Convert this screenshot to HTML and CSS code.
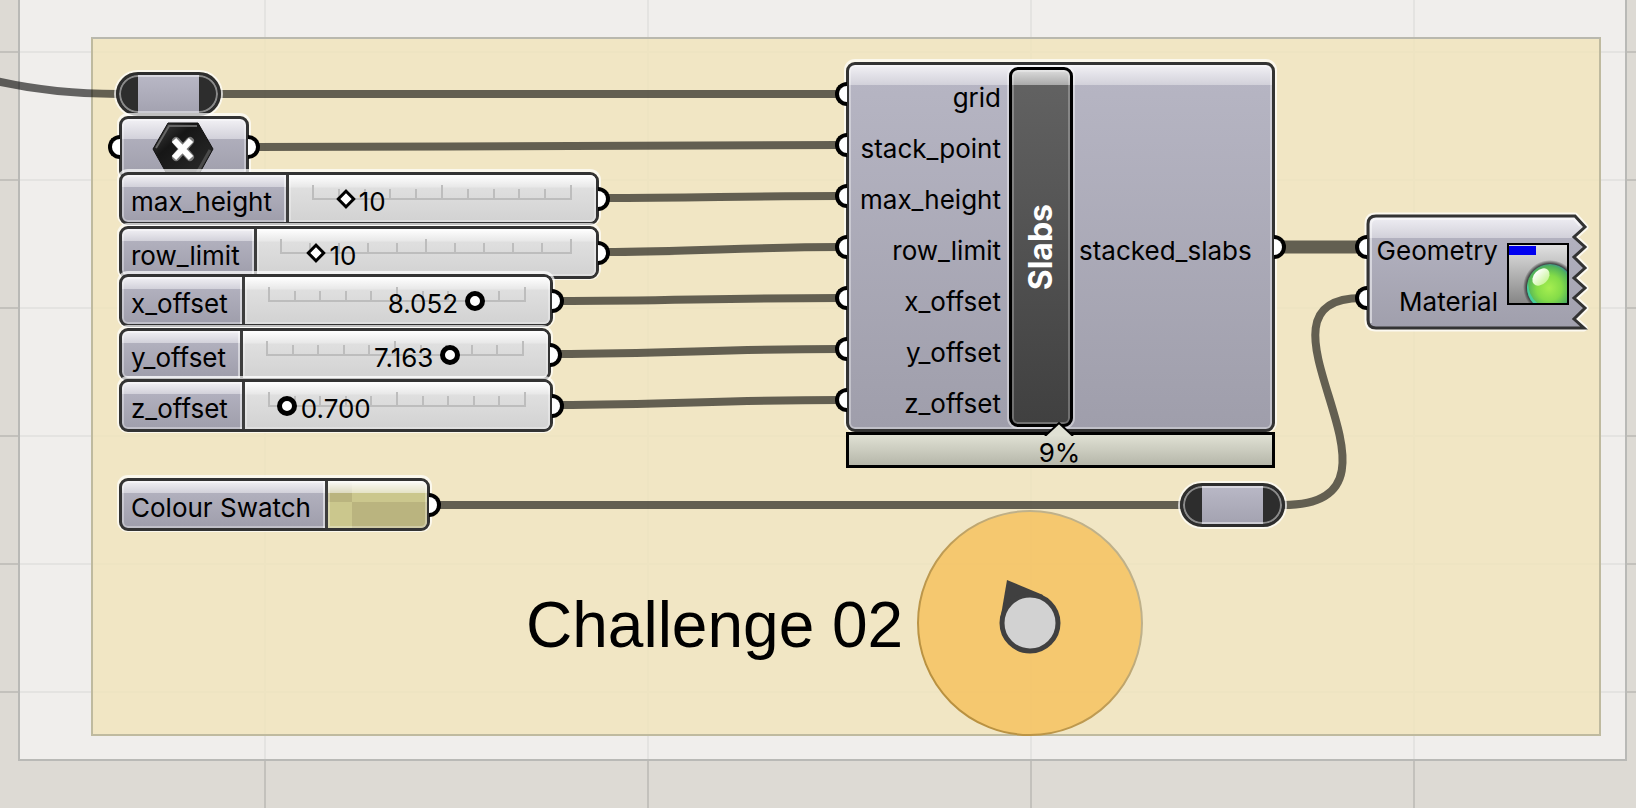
FILE: index.html
```html
<!DOCTYPE html>
<html lang="en">
<head>
<meta charset="utf-8">
<title>Challenge 02</title>
<link rel="stylesheet" href="styles.css">
</head>
<body>
<main class="canvas">
  <div class="panel"></div>
  <section class="group" aria-label="Challenge 02"></section>

  <svg class="wires" width="1636" height="808" aria-hidden="true">
    <path d="M-4 81C40 91 76 94 118 94"/>
    <path d="M218 94H840"/>
    <path d="M255 147C450 147 640 145 840 145"/>
    <path d="M604 198C690 198 750 196 840 196"/>
    <path d="M604 252C690 252 750 247 840 247"/>
    <path d="M558 301C670 301 720 298 840 298"/>
    <path d="M556 354C670 354 720 349 840 349"/>
    <path d="M558 405C670 405 720 400 840 400"/>
    <path d="M436 505H1182"/>
    <path class="thick" d="M1282 247H1360"/>
    <path d="M1283 505C1436 505 1230 298 1362 298"/>
  </svg>

  <div class="relay relay-grid"></div>
  <div class="relay relay-material"></div>

  <div class="node point">
    <i class="port in"></i><i class="port out"></i>
    <svg class="hex" width="64" height="56" viewBox="0 0 64 56">
      <defs><linearGradient id="hx" x1="0" y1="0" x2="1" y2="1"><stop offset="0" stop-color="#444"/><stop offset=".35" stop-color="#161616"/><stop offset="1" stop-color="#2c2c2c"/></linearGradient></defs>
      <path d="M16 1H46L61 27L46 54H16L1 27Z" fill="url(#hx)" stroke="#111" stroke-width="1"/>
      <path d="M4 26L17 4H45" fill="none" stroke="#666" stroke-width="2"/>
      <path d="M58 28L45 51" fill="none" stroke="#4a4a4a" stroke-width="3"/>
      <path d="M24 19L38 35M38 19L24 35" stroke="#777" stroke-width="8" stroke-linecap="round"/>
      <path d="M22 18L39 36M39 18L22 36" stroke="#fff" stroke-width="6"/>
    </svg>
  </div>

  <div class="node slider max-height">
    <label for="max">max_height</label>
    <div class="track"><div class="rail" style="--at:12.3%"><i class="ticks"></i><output for="max">10</output></div><input class="whole" id="max" type="range" min="0" max="81" value="10"></div>
    <i class="port out"></i>
  </div>
  <div class="node slider row-limit">
    <label for="row">row_limit</label>
    <div class="track"><div class="rail" style="--at:12%"><i class="ticks"></i><output for="row">10</output></div><input class="whole" id="row" type="range" min="0" max="83" value="10"></div>
    <i class="port out"></i>
  </div>
  <div class="node slider x-offset">
    <label for="xo">x_offset</label>
    <div class="track"><div class="rail" style="--at:80.52%"><i class="ticks"></i><output class="before" for="xo">8.052</output></div><input id="xo" type="range" min="0" max="10" step="0.001" value="8.052"></div>
    <i class="port out"></i>
  </div>
  <div class="node slider y-offset">
    <label for="yo">y_offset</label>
    <div class="track"><div class="rail" style="--at:71.63%"><i class="ticks"></i><output class="before" for="yo">7.163</output></div><input id="yo" type="range" min="0" max="10" step="0.001" value="7.163"></div>
    <i class="port out"></i>
  </div>
  <div class="node slider z-offset">
    <label for="zo">z_offset</label>
    <div class="track"><div class="rail" style="--at:7%"><i class="ticks"></i><output for="zo">0.700</output></div><input id="zo" type="range" min="0" max="10" step="0.001" value="0.7"></div>
    <i class="port out"></i>
  </div>

  <div class="node slider colour">
    <label for="swatch">Colour Swatch</label>
    <button class="swatch" id="swatch" type="button"></button>
    <i class="port out"></i>
  </div>

  <div class="node slabs">
    <ul class="inputs">
      <li>grid<i class="port in"></i></li>
      <li>stack_point<i class="port in"></i></li>
      <li>max_height<i class="port in"></i></li>
      <li>row_limit<i class="port in"></i></li>
      <li>x_offset<i class="port in"></i></li>
      <li>y_offset<i class="port in"></i></li>
      <li>z_offset<i class="port in"></i></li>
    </ul>
    <div class="title"><span>Slabs</span></div>
    <div class="result">stacked_slabs</div>
    <i class="port out"></i>
  </div>
  <div class="profiler">
    <svg class="notch" width="30" height="15" viewBox="0 0 30 15"><path d="M1 15L15 2L29 15Z" fill="#e0e1d4"/><path d="M1 15L15 2L29 15" fill="none" stroke="#000" stroke-width="2"/></svg>
    9%
  </div>

  <div class="preview">
    <svg class="torn" width="226" height="122" viewBox="-3 -3 226 122">
      <defs><linearGradient id="pv" x1="0" y1="0" x2="0" y2="1"><stop offset="0" stop-color="#f1f0f5"/><stop offset=".2" stop-color="#d1d0d9"/><stop offset=".2" stop-color="#b2b1bf"/><stop offset="1" stop-color="#a09fac"/></linearGradient></defs>
      <path class="halo" d="M10 1H209L219 12L208 22L219 32L208 42L219 53L208 63L219 73L208 83L219 93L208 104L218 113H10Q2 113 2 105V9Q2 1 10 1Z"/>
      <path class="body" fill="url(#pv)" d="M10 1H209L219 12L208 22L219 32L208 42L219 53L208 63L219 73L208 83L219 93L208 104L218 113H10Q2 113 2 105V9Q2 1 10 1Z"/>
      <path class="shine" d="M5 108V10Q5 4 11 4H208L214 11"/>
    </svg>
    <ul class="inputs">
      <li>Geometry<i class="port in"></i></li>
      <li>Material<i class="port in"></i></li>
    </ul>
    <svg class="ball" width="62" height="62" viewBox="0 0 62 62">
      <defs>
        <linearGradient id="bg" x1="0" y1="0" x2="0" y2="1"><stop offset="0" stop-color="#e2e2e2"/><stop offset="1" stop-color="#858585"/></linearGradient>
        <radialGradient id="bl" cx=".48" cy=".52" r=".55"><stop offset="0" stop-color="#a6ee50"/><stop offset=".5" stop-color="#84dc48"/><stop offset=".85" stop-color="#52b35a"/><stop offset="1" stop-color="#3f8aa0"/></radialGradient>
        <radialGradient id="sh"><stop offset=".82" stop-color="#222"/><stop offset="1" stop-color="#222" stop-opacity="0"/></radialGradient>
        <linearGradient id="gl" x1="0" y1="0" x2="0" y2="1"><stop offset="0" stop-color="#fff"/><stop offset="1" stop-color="#c9f59a"/></linearGradient>
        <clipPath id="cl"><rect x="2" y="2" width="58" height="58"/></clipPath>
      </defs>
      <rect x="1" y="1" width="60" height="60" fill="url(#bg)"/>
      <g clip-path="url(#cl)">
        <circle cx="43" cy="44" r="27" fill="url(#sh)"/>
        <circle cx="43" cy="44" r="23" fill="url(#bl)"/>
        <path d="M20 44A23 23 0 0 0 28 62L33 62A24 24 0 0 1 22 36Z" fill="#43d3ae" opacity=".8"/>
        <ellipse cx="34" cy="34" rx="10" ry="7" fill="url(#gl)" transform="rotate(-45 34 34)"/>
      </g>
      <rect x="2" y="3" width="27" height="9" fill="#0000f0"/>
      <rect x="1" y="1" width="60" height="60" fill="none" stroke="#000" stroke-width="2"/>
    </svg>
  </div>

  <h1 class="caption">Challenge 02</h1>
  <svg class="dial" width="228" height="228" viewBox="-114 -114 228 228" role="img" aria-label="Named view">
    <defs><linearGradient id="dg" x1="0" y1="1" x2="1" y2="0"><stop offset="0" stop-color="#b78c35"/><stop offset=".5" stop-color="#bf9d57"/><stop offset=".7" stop-color="#bfb18a"/></linearGradient></defs>
    <circle r="112" fill="#f5be53" fill-opacity=".75" stroke="url(#dg)" stroke-width="2"/>
    <path d="M-23-43L13-28L0 0L-30-2Z" fill="#404040"/>
    <circle r="28" fill="#d2d2d2" stroke="#404040" stroke-width="5"/>
  </svg>
</main>
</body>
</html>
```
FILE: styles.css
```css
* { box-sizing: border-box; }

body {
  margin: 0;
  font: 26px/30px Inter, "Liberation Sans", sans-serif;
  color: #000;
}

.canvas {
  position: relative;
  isolation: isolate;
  min-height: 100vh;
  overflow: hidden;
  background-color: #dddad4;
  background-image:
    linear-gradient(90deg, #c3c1bc 2px, transparent 2px),
    linear-gradient(#c3c1bc 2px, transparent 2px);
  background-size: 383px 128px;
  background-position: 264px 0, 0 51px;
}

.panel {
  position: absolute;
  inset: -4px 9px 47px 18px;
  background: rgba(255, 255, 255, .55);
  border: 2px solid #b9b9b6;
  background-clip: padding-box;
}

.group {
  position: absolute;
  inset: 37px 35px 72px 91px;
  background: rgba(240, 228, 187, .82);
  background-clip: padding-box;
  border: 2px solid #bfba9f;
  border-top-color: #b9b8ae;
}

.wires { position: absolute; left: 0; top: 0; fill: none; stroke: rgba(0, 0, 0, .59); stroke-width: 8px; }
.wires .thick { stroke-width: 13px; }

/* nodes */
.node {
  --gloss: 12px;
  position: absolute;
  display: flex;
  border: 3px solid #333;
  border-radius: 9px;
  background:
    linear-gradient(#f2f1f5, #d2d1da) top / 100% var(--gloss) no-repeat,
    linear-gradient(#b7b6c4, #9f9eab);
  box-shadow: 0 -1px 0 2px rgba(255, 255, 255, .7), inset 0 0 0 2px rgba(255, 255, 255, .35);
}

.port {
  position: absolute;
  top: calc(50% - 12px);
  width: 12px;
  height: 24px;
  border: 4px solid #000;
  background: #fff;
}
.port.in { left: -14px; border-right: 0; border-radius: 12px 0 0 12px; }
.port.out { right: -14px; border-left: 0; border-radius: 0 12px 12px 0; }

.relay {
  position: absolute;
  width: 105px;
  height: 44px;
  border: 3px solid #2d2d2d;
  border-radius: 22px;
  background: linear-gradient(90deg, #2d2d2d 19px, transparent 19px, transparent calc(100% - 19px), #2d2d2d calc(100% - 19px)), linear-gradient(#b9b8c6, #a3a2b0);
  box-shadow: 0 0 0 2px rgba(255, 255, 255, .7), inset 0 0 0 2px rgba(255, 255, 255, .45);
}
.relay-grid { left: 116px; top: 72px; }
.relay-material { left: 1180px; top: 483px; }

.point { --gloss: 20px; left: 119px; top: 116px; width: 130px; height: 64px; justify-content: center; padding-top: 3px; }
.point .port { top: 16px; }

.slider { left: 119px; width: 434px; height: 53px; }
.slider label { padding: 12px 14px 0 9px; border-right: 3px solid #3d3d3d; white-space: nowrap; box-shadow: inset -2px 0 0 rgba(255, 255, 255, .5); }

.max-height { top: 172px; width: 480px; }
.row-limit { top: 226px; width: 480px; }
.x-offset { top: 274px; }
.y-offset { top: 328px; width: 432px; }
.z-offset { top: 379px; }
.colour { top: 478px; width: 311px; }

.track {
  flex: 1;
  display: grid;
  align-items: center;
  padding: 0 15px 0 14px;
  border-radius: 0 6px 6px 0;
  background: linear-gradient(#fff, #e8e8e8 12px, #dfdfdf 13px, #d2d2d2);
  box-shadow: inset 0 0 0 2px rgba(255, 255, 255, .3);
}
.rail { grid-area: 1 / 1; position: relative; height: 47px; margin: 0 10px; }
.ticks {
  --tick: #bdbdbd;
  position: absolute;
  inset: 10px -1px auto;
  height: 15px;
  border: solid var(--tick);
  border-width: 0 2px 2px 0;
  background:
    linear-gradient(var(--tick), var(--tick)) 0 0 / 2px 100% no-repeat,
    linear-gradient(var(--tick), var(--tick)) calc(50% + 1px) 0 / 2px 100% no-repeat,
    repeating-linear-gradient(90deg, var(--tick) 0 2px, transparent 2px 10%) bottom / 100% 9px no-repeat;
}
output { position: absolute; top: 12px; left: calc(var(--at) + 14px); }
output.before { left: auto; right: calc(100% - var(--at) + 17px); }

input[type="range"] {
  grid-area: 1 / 1;
  position: relative;
  appearance: none;
  width: 100%;
  height: 20px;
  margin: 0;
  background: transparent;
}
input::-webkit-slider-thumb {
  appearance: none;
  width: 20px;
  height: 20px;
  border: 5px solid #000;
  border-radius: 50%;
  background: #fff;
}
input.whole::-webkit-slider-thumb {
  width: 14px;
  height: 14px;
  margin: 0 3px;
  border: 3px solid #000;
  border-radius: 0;
  transform: rotate(45deg);
}

.swatch {
  flex: 1;
  padding: 0;
  border: 0;
  border-radius: 0 6px 6px 0;
  background:
    linear-gradient(#fffffff0, #ffffff80) top / 100% 12px no-repeat,
    linear-gradient(#bab47f, #bab47f) 0 0 / 24px 21px no-repeat,
    linear-gradient(#bab47f, #bab47f) 24px 21px / 200px 40px no-repeat,
    #cbc78d;
  box-shadow: inset 0 0 0 2px rgba(255, 255, 255, .3);
}

/* clustered component */
ul { list-style: none; margin: 0; padding: 0; }
.inputs li { position: relative; height: 51px; padding-top: 15px; text-align: right; }
.inputs .port { top: 14px; }

.slabs { --gloss: 20px; left: 846px; top: 62px; width: 429px; height: 370px; }
.slabs .inputs { width: 152px; padding-top: 3px; }
.title {
  display: flex;
  align-items: center;
  justify-content: center;
  width: 64px;
  margin: 2px 0 2px 8px;
  border: 3px solid #000;
  border-radius: 9px;
  background: linear-gradient(#ddd, #aaa) top / 100% 15px no-repeat, linear-gradient(#636363, #404040);
  box-shadow: 0 0 0 2px rgba(255, 255, 255, .4), inset 0 0 0 2px rgba(255, 255, 255, .25);
}
.title span { color: #fff; font-size: 32px; font-weight: 700; line-height: 36px; writing-mode: vertical-rl; transform: rotate(180deg); }
.result { align-self: center; padding: 8px 0 0 6px; }

.profiler {
  position: absolute;
  left: 846px;
  top: 432px;
  width: 429px;
  height: 36px;
  padding-right: 2px;
  border: 3px solid #000;
  line-height: 36px;
  text-align: center;
  background: linear-gradient(#e0e1d4, #b6b7aa);
}
.notch { position: absolute; left: 195px; top: -14px; }

.preview { position: absolute; left: 1366px; top: 215px; display: flex; padding: 6px 0; }
.torn { position: absolute; left: -3px; top: -3px; }
.torn .halo { fill: none; stroke: rgba(255, 255, 255, .75); stroke-width: 7px; stroke-linejoin: round; }
.torn .body { stroke: #333; stroke-width: 3px; }
.torn .shine { fill: none; stroke: rgba(255, 255, 255, .5); stroke-width: 2px; }
.preview .inputs { position: relative; width: 132px; }
.preview .port { left: -11px; }
.ball { position: relative; margin: 22px 0 0 9px; }

.caption { position: absolute; left: 526px; top: 586px; margin: 0; font-family: "Liberation Sans", Arial, sans-serif; font-size: 64px; font-weight: 400; line-height: 78px; white-space: nowrap; }
.dial { position: absolute; left: 916px; top: 509px; }
```
